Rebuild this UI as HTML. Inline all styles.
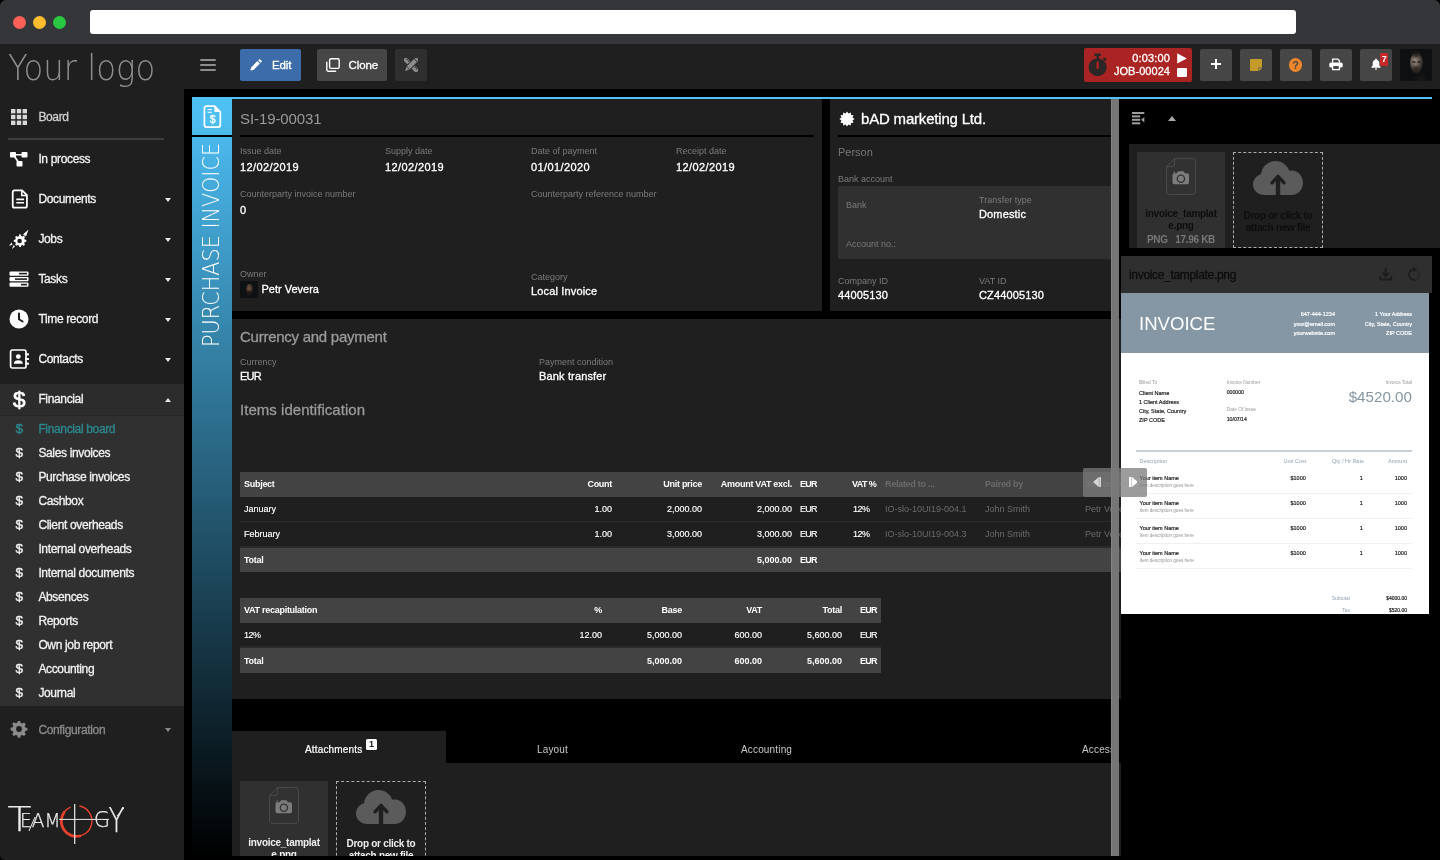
<!DOCTYPE html>
<html lang="en">
<head>
<meta charset="utf-8">
<title>Purchase invoice SI-19-00031</title>
<style>
*{box-sizing:border-box;margin:0;padding:0}
html,body{width:1440px;height:860px;overflow:hidden;background:#000}
body{position:relative;font-family:"Liberation Sans",sans-serif;color:#fff;font-size:11px;line-height:1}
.abs{position:absolute}
.med{font-weight:normal!important;-webkit-text-stroke:0.300px currentColor}
#win{will-change:transform;-webkit-font-smoothing:antialiased;position:absolute;left:0;top:0;width:1440px;height:860px;border-radius:6px 6px 0 5px;overflow:hidden;background:#000}
/* browser chrome */
#chrome{position:absolute;left:0;top:0;width:1440px;height:44px;background:#35363a}
.tl{position:absolute;top:15.500px;width:13px;height:13px;border-radius:50%}
#url{position:absolute;left:90px;top:10px;width:1206px;height:24px;background:#fff;border-radius:3px}
/* sidebar */
#side{position:absolute;left:0;top:44px;width:184px;height:816px;background:#1f1f1f}
#logo{letter-spacing:0;position:absolute;left:8px;top:1.500px;font-size:36px;line-height:44px;transform:scaleX(.898);color:#8e8e8e;font-family:"DejaVu Sans","Liberation Sans",sans-serif;font-weight:200;white-space:nowrap;transform-origin:0 0}
.mi{position:absolute;left:0;width:184px;height:40px}
.mi .t{letter-spacing:-0.350px;position:absolute;left:38.400px;top:13.100px;font-size:12px;line-height:14px;font-weight:bold;color:#f2f2f2;white-space:nowrap}
.mi svg.ic{position:absolute;left:9px;top:10px;width:20px;height:20px}
.caret{position:absolute;left:165px;top:19px;width:0;height:0;border-left:3.700px solid transparent;border-right:3.700px solid transparent;border-top:4px solid #e6e6e6}
.caret.up{border-top:none;border-bottom:4px solid #e6e6e6;top:18.500px}
.si{position:absolute;left:0;width:184px;height:24px}
.si .t{letter-spacing:-0.350px;position:absolute;left:38.400px;top:5.300px;font-size:12px;line-height:14px;font-weight:bold;color:#f2f2f2;white-space:nowrap}
.si .d{position:absolute;left:13.200px;top:4.300px;width:12px;font-size:13.500px;line-height:15px;color:#f2f2f2;text-align:center;-webkit-text-stroke:0.400px currentColor;letter-spacing:0}
/* toolbar */
#tb{position:absolute;left:184px;top:44px;width:1256px;height:45px;background:#1f1f1f}
.btn{position:absolute;top:5px;height:32px;border-radius:2px;background:#464646}
.btn .t{letter-spacing:-0.100px;position:absolute;top:8.500px;font-size:11.500px;line-height:14px;font-weight:bold;color:#fff;white-space:nowrap}
/* content */
#main{position:absolute;left:184px;top:89px;width:1256px;height:771px;background:#000}
.lbl{position:absolute;font-size:9px;line-height:11px;color:#7b7b7b;white-space:nowrap}
.val{letter-spacing:0.150px;position:absolute;font-size:11px;line-height:13px;color:#fff;font-weight:bold;white-space:nowrap}
.h2{position:absolute;font-size:15px;line-height:18px;color:#9a9a9a;white-space:nowrap}
.panel{position:absolute;background:#1f1f1f}

.th{letter-spacing:-0.280px;position:absolute;font-size:9px;line-height:11px;font-weight:bold;color:#fff;white-space:nowrap}
.td{position:absolute;font-size:9px;line-height:11px;color:#fff;white-space:nowrap;-webkit-text-stroke:0.150px currentColor}
.tab{letter-spacing:0.160px;position:absolute;font-size:10px;line-height:12px;color:#c8c8c8;white-space:nowrap}
.vtxt span{letter-spacing:0;position:absolute;left:6px;top:210px;transform-origin:0 0;transform:rotate(-90deg) scaleX(.892);font-family:"DejaVu Sans","Liberation Sans",sans-serif;font-weight:200;font-size:23.300px;line-height:26px;color:#fff;white-space:nowrap;display:block}
.fname{position:absolute;left:0;width:100%;text-align:center;font-size:10px;line-height:12px;color:#f0f0f0;font-weight:bold;letter-spacing:-0.280px}
.drop{border:1px dashed #ababab}

</style>
</head>
<body>
<div id="win">

<!-- ===== browser chrome ===== -->
<div id="chrome">
  <div class="tl" style="left:13px;background:#fe5f57"></div>
  <div class="tl" style="left:33px;background:#febc2e"></div>
  <div class="tl" style="left:53px;background:#28c840"></div>
  <div id="url"></div>
</div>

<!-- ===== sidebar ===== -->
<div id="side">
  <div id="logo">Your logo</div>
  <!-- Board -->
  <div class="mi" style="top:53px">
    <svg class="ic" viewBox="0 0 20 20" style="left:9px;top:10px"><g fill="#d8d8d8"><rect x="2" y="2" width="4.4" height="4.4"/><rect x="7.8" y="2" width="4.4" height="4.4"/><rect x="13.6" y="2" width="4.4" height="4.4"/><rect x="2" y="7.8" width="4.4" height="4.4"/><rect x="7.8" y="7.8" width="4.4" height="4.4"/><rect x="13.6" y="7.8" width="4.4" height="4.4"/><rect x="2" y="13.6" width="4.4" height="4.4"/><rect x="7.8" y="13.6" width="4.4" height="4.4"/><rect x="13.6" y="13.6" width="4.4" height="4.4"/></g></svg>
    <div class="t med" style="color:#d0d0d0">Board</div>
  </div>
  <div class="abs" style="left:8px;top:94px;width:156px;height:2px;background:#3e3e3e"></div>
  <!-- In process -->
  <div class="mi" style="top:95px">
    <svg class="ic" viewBox="0 0 20 20"><g fill="#fff"><rect x="1" y="3" width="6" height="5.5" rx="1"/><rect x="12.5" y="3" width="6" height="5.5" rx="1"/><rect x="7.5" y="12" width="6" height="5.5" rx="1"/></g><path d="M7 5.7h6M4.5 6l5.5 8" stroke="#fff" stroke-width="1.6" fill="none"/></svg>
    <div class="t med">In process</div>
  </div>
  <!-- Documents -->
  <div class="mi" style="top:135px">
    <svg class="ic" viewBox="0 0 20 20" style="left:9.500px;top:9px;width:21px;height:22px"><path d="M4.2 1.8h7.3l4.6 4.6v10.2a1.6 1.6 0 0 1-1.6 1.6H4.2a1.6 1.6 0 0 1-1.6-1.6V3.4a1.6 1.6 0 0 1 1.6-1.6z" fill="none" stroke="#fff" stroke-width="1.7"/><path d="M11.2 2v4.6h4.6" fill="none" stroke="#fff" stroke-width="1.5"/><path d="M6 10.4h7.4M6 13.6h7.4" stroke="#fff" stroke-width="1.6"/></svg>
    <div class="t med">Documents</div><div class="caret"></div>
  </div>
  <!-- Jobs -->
  <div class="mi" style="top:175px">
    <svg class="ic" viewBox="0 0 20 20"><g fill="#fff"><path d="M10.2 5.2l1.7.3.3 1.5 1.2.6 1.4-.8 1.2 1.2-.8 1.4.6 1.2 1.5.3v1.8l-1.5.3-.6 1.2.8 1.4-1.2 1.2-1.4-.8-1.2.6-.3 1.5h-1.7l-.3-1.5-1.2-.6-1.4.8-1.2-1.2.8-1.4-.6-1.2-1.5-.3v-1.8l1.5-.3.6-1.2-.8-1.4L7.300 7l1.400.800 1.200-.6z"/><path d="M14 5.500L19.500.5 17 7.500z"/><path d="M2.500 13.500L0 17l3.500-1.500zM4.500 16L3 20l3-2.500z"/></g><circle cx="10.600" cy="12" r="2.300" fill="#1f1f1f"/></svg>
    <div class="t med">Jobs</div><div class="caret"></div>
  </div>
  <!-- Tasks -->
  <div class="mi" style="top:215px">
    <svg class="ic" viewBox="0 0 20 20"><g fill="#fff"><rect x="0.500" y="2.500" width="19" height="4.200" rx="1"/><rect x="0.500" y="8" width="19" height="4.200" rx="1"/><rect x="0.500" y="13.500" width="19" height="4.200" rx="1"/></g><g fill="#1f1f1f"><rect x="10" y="3.800" width="8" height="1.600"/><rect x="6" y="9.300" width="12" height="1.600"/><rect x="12" y="14.800" width="6" height="1.600"/></g></svg>
    <div class="t med">Tasks</div><div class="caret"></div>
  </div>
  <!-- Time record -->
  <div class="mi" style="top:255px">
    <svg class="ic" viewBox="0 0 20 20"><circle cx="10" cy="10" r="9.500" fill="#fff"/><path d="M10 4.500v5.800l3.600 2.200" stroke="#1f1f1f" stroke-width="2" fill="none" stroke-linecap="round"/></svg>
    <div class="t med">Time record</div><div class="caret"></div>
  </div>
  <!-- Contacts -->
  <div class="mi" style="top:295px">
    <svg class="ic" viewBox="0 0 20 20"><rect x="1.600" y="1" width="15.400" height="18" rx="1.800" fill="none" stroke="#fff" stroke-width="1.700"/><path d="M17.500 5.300h1.600M17.500 10h1.600M17.500 14.700h1.600" stroke="#fff" stroke-width="2.200" stroke-linecap="round"/><circle cx="9.300" cy="7.600" r="2.400" fill="#fff"/><path d="M4.800 14.800c0-2.500 2-3.600 4.500-3.600s4.500 1.100 4.500 3.600z" fill="#fff"/></svg>
    <div class="t med">Contacts</div><div class="caret"></div>
  </div>
  <!-- Financial (open) -->
  <div class="abs" style="left:0;top:340px;width:184px;height:322px;background:#303030"></div>
  <div class="abs" style="left:0;top:340px;width:184px;height:32px;background:#2c2c2c"></div>
  <div class="abs" style="left:0;top:371px;width:184px;height:1px;background:#262626"></div>
  <div class="mi" style="top:335px">
    <div class="abs" style="left:11.300px;top:6.500px;width:16px;font-size:22.500px;line-height:28px;color:#fff;text-align:center;-webkit-text-stroke:0.700px #fff">$</div>
    <div class="t med">Financial</div><div class="caret up"></div>
  </div>
  <div class="si" style="top:373px"><div class="d" style="color:#2b8a90">$</div><div class="t med" style="color:#2b8a90">Financial board</div></div>
  <div class="si" style="top:397px"><div class="d">$</div><div class="t med">Sales invoices</div></div>
  <div class="si" style="top:421px"><div class="d">$</div><div class="t med">Purchase invoices</div></div>
  <div class="si" style="top:445px"><div class="d">$</div><div class="t med">Cashbox</div></div>
  <div class="si" style="top:469px"><div class="d">$</div><div class="t med">Client overheads</div></div>
  <div class="si" style="top:493px"><div class="d">$</div><div class="t med">Internal overheads</div></div>
  <div class="si" style="top:517px"><div class="d">$</div><div class="t med">Internal documents</div></div>
  <div class="si" style="top:541px"><div class="d">$</div><div class="t med">Absences</div></div>
  <div class="si" style="top:565px"><div class="d">$</div><div class="t med">Reports</div></div>
  <div class="si" style="top:589px"><div class="d">$</div><div class="t med">Own job report</div></div>
  <div class="si" style="top:613px"><div class="d">$</div><div class="t med">Accounting</div></div>
  <div class="si" style="top:637px"><div class="d">$</div><div class="t med">Journal</div></div>
  <!-- Configuration -->
  <div class="mi" style="top:665px">
    <svg class="ic" viewBox="0 0 20 20" style="left:10px;top:11px;width:18px;height:18px"><path d="M8.600 1h2.800l.5 2.300 1.700.7 2-1.300 2 2-1.300 2 .7 1.700 2.300.500v2.800l-2.300.500-.7 1.700 1.300 2-2 2-2-1.300-1.700.700-.5 2.300H8.600l-.5-2.300-1.700-.7-2 1.300-2-2 1.300-2-.7-1.700L.7 11.400V8.600L3 8.100l.7-1.700-1.300-2 2-2 2 1.300 1.700-.7z" fill="#8a8a8a"/><circle cx="10" cy="10" r="3.200" fill="#1f1f1f"/></svg>
    <div class="t med" style="color:#8a8a8a;top:13.800px">Configuration</div><div class="caret" style="border-top-color:#8a8a8a"></div>
  </div>
  <!-- Teamogy logo -->
  <svg class="abs" style="left:0;top:746px" width="160" height="70" viewBox="0 0 160 70">
    <g font-family="'DejaVu Sans','Liberation Sans',sans-serif" font-weight="200" fill="#ececec" stroke="#ececec" stroke-width="0.250">
      <text x="7.500" y="40.600" font-size="33" textLength="24" lengthAdjust="spacingAndGlyphs">T</text>
      <text x="20" y="36.700" font-size="19.500" textLength="40.500" lengthAdjust="spacingAndGlyphs">EAM</text>
      <text x="94" y="37.200" font-size="21.500" textLength="16" lengthAdjust="spacingAndGlyphs">G</text>
      <text x="108.500" y="41.700" font-size="34" textLength="16" lengthAdjust="spacingAndGlyphs">Y</text>
    </g>
    <path d="M29 41L35 27M117 26L124 18" stroke="#ececec" stroke-width="1" fill="none"/>
    <circle cx="76.700" cy="31" r="15.200" fill="none" stroke="#e8412c" stroke-width="1.400" stroke-dasharray="86 9.500" transform="rotate(-80 76.700 31)"/>
    <path d="M64 22.500A15.200 15.200 0 0 0 80 46" fill="none" stroke="#e8412c" stroke-width="2.800" stroke-linecap="round"/>
    <path d="M74.700 14v40" stroke="#ececec" stroke-width="1.200"/>
    <path d="M59 29.400h50" stroke="#ececec" stroke-width="1"/>
  </svg>
<!--SIDEBAR_END-->
</div>

<!-- ===== toolbar ===== -->
<div id="tb">
  <!-- hamburger -->
  <div class="abs" style="left:16px;top:14.600px;width:16px;height:2.400px;background:#8d8d8d;border-radius:1px"></div>
  <div class="abs" style="left:16px;top:19.800px;width:16px;height:2.400px;background:#8d8d8d;border-radius:1px"></div>
  <div class="abs" style="left:16px;top:25px;width:16px;height:2.400px;background:#8d8d8d;border-radius:1px"></div>
  <!-- Edit -->
  <div class="btn" style="left:56px;width:61px;background:#3c6ca9">
    <svg class="abs" style="left:10px;top:9.500px" width="12" height="12" viewBox="0 0 12 12"><path d="M.4 11.600l.700-3.200 6.300-6.300 2.500 2.500-6.300 6.300z" fill="#fff"/><path d="M8.200 1.300l.9-.9a.9.9 0 0 1 1.200 0l1.300 1.300a.9.9 0 0 1 0 1.200l-.9.900z" fill="#fff"/></svg>
    <div class="t med" style="left:32px">Edit</div>
  </div>
  <!-- Clone -->
  <div class="btn" style="left:133px;width:70px">
    <svg class="abs" style="left:8.500px;top:9px" width="14" height="14" viewBox="0 0 14 14"><rect x="3.600" y="0.800" width="9.600" height="9.600" rx="1.400" fill="none" stroke="#fff" stroke-width="1.400"/><path d="M.8 3.800v8a1.400 1.400 0 0 0 1.400 1.400h8" fill="none" stroke="#fff" stroke-width="1.400"/></svg>
    <div class="t med" style="left:31.500px">Clone</div>
  </div>
  <!-- tools -->
  <div class="btn" style="left:211px;width:32px;background:#2f2f2f">
    <svg class="abs" style="left:9px;top:8.800px" width="14" height="14" viewBox="0 0 14 14"><g fill="#8c8c8c"><g transform="rotate(-45 7 7)"><rect x="4.900" y="-2.200" width="4.200" height="18.400"/></g><g transform="rotate(-45 7 7)" fill="#2f2f2f"><rect x="7.400" y="0" width="1.700" height="1"/><rect x="7.400" y="2.200" width="1.700" height="1"/><rect x="7.400" y="11" width="1.700" height="1"/><rect x="7.400" y="13.200" width="1.700" height="1"/></g><g transform="rotate(45 7 7)"><rect x="3.900" y="-3" width="6.200" height="16.500" fill="#2f2f2f"/><rect x="4.900" y="-2.400" width="4.200" height="2.200"/><rect x="4.900" y="0.600" width="4.200" height="10.200"/><path d="M4.900 11.400h4.200L7 15.400z"/></g></g></svg>
  </div>
  <!-- timer -->
  <div class="abs" style="left:900px;top:4px;width:108px;height:34px;background:#a92422;border-radius:2px">
    <svg class="abs" style="left:4px;top:5px" width="20" height="24" viewBox="0 0 20 24"><g fill="#2c2626"><circle cx="9.600" cy="14.200" r="9"/><rect x="6.400" y="0.400" width="6.500" height="2.600" rx="0.600"/><rect x="8.500" y="2.500" width="2.300" height="3.500"/><rect x="15" y="5" width="3.400" height="2.200" rx=".5" transform="rotate(42 16.700 6.100)"/></g><rect x="8.400" y="8.600" width="2.500" height="7.400" rx="1" fill="#a92422"/></svg>
    <div class="abs med" style="right:22px;top:3.600px;font-size:11px;line-height:13px;white-space:nowrap;letter-spacing:0.150px">0:03:00</div>
    <div class="abs med" style="right:22px;top:16.600px;font-size:11px;line-height:13px;white-space:nowrap;letter-spacing:0.050px">JOB-00024</div>
    <svg class="abs" style="left:93px;top:4.500px" width="10" height="11" viewBox="0 0 10 11"><path d="M.2 .2v10.400l9.600-5.200z" fill="#fff"/></svg>
    <div class="abs" style="left:93.200px;top:20.300px;width:9.800px;height:9px;background:#fff;border-radius:1px"></div>
  </div>
  <!-- plus -->
  <div class="btn" style="left:1016px;width:32px">
    <div class="abs" style="left:10.600px;top:13.600px;width:10.600px;height:2.800px;background:#fff"></div>
    <div class="abs" style="left:14.500px;top:9.700px;width:2.800px;height:10.600px;background:#fff"></div>
  </div>
  <!-- note -->
  <div class="btn" style="left:1056px;width:32px">
    <svg class="abs" style="left:10.300px;top:10px" width="12" height="12" viewBox="0 0 12 12"><path d="M.8 0h10.400a.8.800 0 0 1 .8.800V8l-4 4H.8a.8.800 0 0 1-.800-.800V.8A.8.800 0 0 1 .8 0z" fill="#c49b2b"/><path d="M8 12V9a1 1 0 0 1 1-1h3z" fill="#8a7a4a"/><path d="M9.300 12V10a.7.700 0 0 1 .7-.700h2z" fill="#b8922e"/></svg>
  </div>
  <!-- help -->
  <div class="btn" style="left:1096px;width:32px">
    <div class="abs" style="left:8.800px;top:9px;width:13.500px;height:13.500px;border-radius:50%;background:#f0862a"></div>
    <div class="abs" style="left:8.800px;top:9.500px;width:13.500px;font-size:11px;line-height:13px;font-weight:bold;color:#454545;text-align:center">?</div>
  </div>
  <!-- print -->
  <div class="btn" style="left:1136px;width:32px">
    <svg class="abs" style="left:9px;top:8.500px" width="14" height="13" viewBox="0 0 14 13"><path d="M3.600 4.500V1.100h5.200l1.600 1.600v1.800" fill="none" stroke="#fff" stroke-width="1.300"/><rect x="0.300" y="4.600" width="13.400" height="5" rx="1.600" fill="#fff"/><rect x="3.600" y="7.400" width="6.800" height="4.200" fill="#464646" stroke="#fff" stroke-width="1.300"/></svg>
  </div>
  <!-- bell -->
  <div class="btn" style="left:1176px;width:32px">
    <svg class="abs" style="left:11px;top:8.700px" width="10" height="12" viewBox="0 0 12 14"><path d="M6 .500c.6 0 1 .4 1 1v.400c1.800.5 3 2 3 4v3l1.500 1.700v.9H.5v-.9L2 8.900v-3c0-2 1.200-3.500 3-4v-.400c0-.6.400-1 1-1z" fill="#fff"/><path d="M4.500 12.300h3a1.500 1.500 0 0 1-3 0z" fill="#fff"/></svg>
    <div class="abs" style="left:20.300px;top:4px;width:7.700px;height:12.500px;background:#c62828;border-radius:1.500px"></div>
    <div class="abs" style="left:20.300px;top:5px;width:7.700px;font-size:9px;line-height:10px;font-weight:bold;text-align:center;color:#fff;letter-spacing:0">7</div>
  </div>
  <!-- avatar -->
  <div class="abs" style="left:1216px;top:5px;width:32px;height:32px;background:#0d0f11;border-radius:2px;overflow:hidden">
    <div class="abs" style="left:0;top:0;width:32px;height:32px;filter:blur(.700px)">
      <div class="abs" style="left:9.500px;top:4px;width:13px;height:20px;border-radius:48% 48% 50% 50%;background:radial-gradient(ellipse at 40% 40%,#94877b 0%,#6a5e54 32%,#352e2a 62%,rgba(13,15,17,0) 92%)"></div>
      <div class="abs" style="left:10px;top:2px;width:12px;height:7px;border-radius:50%;background:radial-gradient(ellipse at 50% 40%,#1d1a18 0%,rgba(13,15,17,0) 90%)"></div>
      <div class="abs" style="left:11.500px;top:12px;width:4px;height:2px;border-radius:50%;background:#2a2421;opacity:.800"></div>
      <div class="abs" style="left:17px;top:12px;width:4px;height:2px;border-radius:50%;background:#2a2421;opacity:.800"></div>
      <div class="abs" style="left:11px;top:17px;width:10px;height:8px;border-radius:30% 30% 50% 50%;background:radial-gradient(ellipse at 50% 45%,rgba(38,32,29,.850) 0%,rgba(13,15,17,0) 100%)"></div>
      <div class="abs" style="left:14px;top:23px;width:14px;height:10px;border-radius:50% 50% 0 0;background:radial-gradient(ellipse at 50% 100%,#1c1a19 0%,rgba(13,15,17,0) 90%)"></div>
    </div>
  </div>
<!--TOOLBAR_END-->
</div>

<!-- ===== main ===== -->
<div id="main">
<!--MAIN_START-->
<div class="abs" style="left:48px;top:10px;width:590px;height:212px;background:#1f1f1f;"></div>
<div class="abs" style="left:646px;top:10px;width:289px;height:212px;background:#1f1f1f;"></div>
<div class="abs" style="left:48px;top:230px;width:889px;height:380px;background:#1f1f1f;"></div>
<div class="abs" style="left:48px;top:642px;width:214px;height:32px;background:#1f1f1f;"></div>
<div class="abs" style="left:48px;top:674px;width:889px;height:93px;background:#1f1f1f;"></div>
<div class="abs" style="left:8px;top:8px;width:1240px;height:2px;background:#4fc3f7;"></div>
<div class="abs" style="left:8px;top:8px;width:40px;height:38px;background:linear-gradient(180deg,#4fc2f5,#4bbbec)">
<svg class="abs" style="left:10.500px;top:8px" width="20" height="24" viewBox="0 0 20 24"><path d="M3.400 1.200h8.200l5.700 5.700v13.200a2 2 0 0 1-2 2H3.400a2 2 0 0 1-2-2V3.200a2 2 0 0 1 2-2z" fill="none" stroke="#fff" stroke-width="1.700"/><path d="M11.400 1.600v5.500h5.500z" fill="#fff"/><path d="M4.600 4.500h4.300M4.600 7.200h4.300" stroke="#fff" stroke-width="1.100"/><text x="9.700" y="18.300" font-size="10.500" fill="#fff" stroke="#fff" stroke-width=".3" text-anchor="middle" font-family="'Liberation Sans',sans-serif">$</text></svg>
</div>
<div class="abs" style="left:8px;top:48px;width:40px;height:719px;background:linear-gradient(180deg,#4ab7eb 0%,#000 100%);"></div>
<div class="abs vtxt" style="left:8px;top:48px;width:40px;height:212px"><span>PURCHASE INVOICE</span></div>
<div class="h2" style="left:56px;top:21px;color:#9a9a9a;letter-spacing:-0.090px">SI-19-00031</div>
<div class="abs" style="left:56px;top:46px;width:574px;height:2px;background:#000;"></div>
<div class="lbl" style="left:56px;top:57px;">Issue date</div>
<div class="val med" style="left:56px;top:72px;letter-spacing:0.400px">12/02/2019</div>
<div class="lbl" style="left:201px;top:57px;">Supply date</div>
<div class="val med" style="left:201px;top:72px;letter-spacing:0.400px">12/02/2019</div>
<div class="lbl" style="left:347px;top:57px;">Date of payment</div>
<div class="val med" style="left:347px;top:72px;letter-spacing:0.400px">01/01/2020</div>
<div class="lbl" style="left:492px;top:57px;">Receipt date</div>
<div class="val med" style="left:492px;top:72px;letter-spacing:0.400px">12/02/2019</div>
<div class="lbl" style="left:56px;top:100px;">Counterparty invoice number</div>
<div class="val med" style="left:56px;top:115px;">0</div>
<div class="lbl" style="left:347px;top:100px;">Counterparty reference number</div>
<div class="lbl" style="left:56px;top:180px;">Owner</div>
<div class="abs" style="left:56px;top:192px;width:18px;height:17px;background:#0e1114;border-radius:2px;overflow:hidden"><div class="abs" style="left:5.500px;top:3px;width:7px;height:11px;border-radius:45% 45% 50% 50%;filter:blur(.600px);background:radial-gradient(ellipse at 45% 38%,#6f5646 0%,#4a382c 38%,#221c19 72%,rgba(14,17,20,0) 100%)"></div><div class="abs" style="left:6px;top:9.500px;width:6px;height:5px;border-radius:30% 30% 50% 50%;filter:blur(.500px);background:rgba(24,20,18,.700)"></div></div>
<div class="val med" style="left:77.5px;top:194px;letter-spacing:0">Petr Vevera</div>
<div class="lbl" style="left:347px;top:182.5px;">Category</div>
<div class="val med" style="left:347px;top:196px;">Local Invoice</div>
<svg class="abs" style="left:655px;top:22px" width="16" height="16" viewBox="0 0 16 16"><polygon fill="#fff" points="8.00,0.40 9.48,2.49 11.80,1.42 12.03,3.97 14.58,4.20 13.51,6.52 15.60,8.00 13.51,9.48 14.58,11.80 12.03,12.03 11.80,14.58 9.48,13.51 8.00,15.60 6.52,13.51 4.20,14.58 3.97,12.03 1.42,11.80 2.49,9.48 0.40,8.00 2.49,6.52 1.42,4.20 3.97,3.97 4.20,1.42 6.52,2.49"/></svg>
<div class="h2 med" style="left:677px;top:21px;color:#fff;letter-spacing:-0.190px">bAD marketing Ltd.</div>
<div class="abs" style="left:654px;top:46px;width:281px;height:2px;background:#000;"></div>
<div class="lbl" style="left:654px;top:57px;font-size:11px;line-height:13px;color:#777">Person</div>
<div class="lbl" style="left:654px;top:85px;">Bank account</div>
<div class="abs" style="left:654px;top:97px;width:281px;height:73px;background:#303030;"></div>
<div class="lbl" style="left:662px;top:111px;">Bank</div>
<div class="lbl" style="left:795px;top:106px;">Transfer type</div>
<div class="val med" style="left:795px;top:119px;">Domestic</div>
<div class="lbl" style="left:662px;top:150px;">Account no.:</div>
<div class="lbl" style="left:654px;top:187px;">Company ID</div>
<div class="val med" style="left:654px;top:200px;">44005130</div>
<div class="lbl" style="left:795px;top:187px;">VAT ID</div>
<div class="val med" style="left:795px;top:200px;">CZ44005130</div>
<div class="h2 med" style="left:56px;top:239px;letter-spacing:-0.260px;-webkit-text-stroke-width:0.300px">Currency and payment</div>
<div class="lbl" style="left:56px;top:268px;">Currency</div>
<div class="val med" style="left:56px;top:281px;letter-spacing:-0.800px">EUR</div>
<div class="lbl" style="left:355px;top:268px;">Payment condition</div>
<div class="val med" style="left:355px;top:281px;">Bank transfer</div>
<div class="h2 med" style="left:56px;top:312px;letter-spacing:0.040px;-webkit-text-stroke-width:0.300px">Items identification</div>
<div class="abs" style="left:56px;top:383px;width:881px;height:25px;background:#434343;"></div>
<div class="abs" style="left:56px;top:432px;width:881px;height:1px;background:#2e2e2e;"></div>
<div class="abs" style="left:56px;top:457px;width:881px;height:2px;background:#2a2a2a;"></div>
<div class="abs" style="left:56px;top:459px;width:881px;height:24px;background:#434343;"></div>
<div class="th" style="left:60px;top:390px;">Subject</div>
<div class="th" style="right:828px;top:390px;">Count</div>
<div class="th" style="right:738px;top:390px;">Unit price</div>
<div class="th" style="right:648px;top:390px;">Amount VAT excl.</div>
<div class="th" style="left:616px;top:390px;letter-spacing:-0.700px">EUR</div>
<div class="th" style="left:668px;top:390px;letter-spacing:-0.600px">VAT %</div>
<div class="th" style="left:701px;top:390px;color:#6b6b6b">Related to ...</div>
<div class="th" style="left:801px;top:390px;color:#6b6b6b">Paired by</div>
<div class="th" style="left:901px;top:390px;color:#6b6b6b">Job owner</div>
<div class="td" style="left:60px;top:415px;">January</div>
<div class="td" style="right:828px;top:415px;">1.00</div>
<div class="td" style="right:738px;top:415px;">2,000.00</div>
<div class="td" style="right:648px;top:415px;">2,000.00</div>
<div class="td" style="left:616px;top:415px;letter-spacing:-0.700px">EUR</div>
<div class="td" style="left:669px;top:415px;letter-spacing:-0.500px">12%</div>
<div class="td" style="left:701px;top:415px;color:#6b6b6b;font-weight:normal;-webkit-text-stroke:0">IO-slo-10UI19-004.1</div>
<div class="td" style="left:801px;top:415px;color:#6b6b6b;font-weight:normal;-webkit-text-stroke:0">John Smith</div>
<div class="td" style="left:901px;top:415px;color:#6b6b6b;font-weight:normal;-webkit-text-stroke:0">Petr Vevera</div>
<div class="td" style="left:60px;top:440px;">February</div>
<div class="td" style="right:828px;top:440px;">1.00</div>
<div class="td" style="right:738px;top:440px;">3,000.00</div>
<div class="td" style="right:648px;top:440px;">3,000.00</div>
<div class="td" style="left:616px;top:440px;letter-spacing:-0.700px">EUR</div>
<div class="td" style="left:669px;top:440px;letter-spacing:-0.500px">12%</div>
<div class="td" style="left:701px;top:440px;color:#6b6b6b;font-weight:normal;-webkit-text-stroke:0">IO-slo-10UI19-004.3</div>
<div class="td" style="left:801px;top:440px;color:#6b6b6b;font-weight:normal;-webkit-text-stroke:0">John Smith</div>
<div class="td" style="left:901px;top:440px;color:#6b6b6b;font-weight:normal;-webkit-text-stroke:0">Petr Vevera</div>
<div class="th" style="left:60px;top:466px;">Total</div>
<div class="th" style="right:648px;top:466px;letter-spacing:0">5,000.00</div>
<div class="th" style="left:616px;top:466px;letter-spacing:-0.700px">EUR</div>
<div class="abs" style="left:56px;top:509px;width:641px;height:25px;background:#434343;"></div>
<div class="abs" style="left:56px;top:557px;width:641px;height:2px;background:#2a2a2a;"></div>
<div class="abs" style="left:56px;top:559px;width:641px;height:25px;background:#434343;"></div>
<div class="th" style="left:60px;top:516px;">VAT recapitulation</div>
<div class="th" style="right:838px;top:516px;">%</div>
<div class="th" style="right:758px;top:516px;">Base</div>
<div class="th" style="right:678px;top:516px;">VAT</div>
<div class="th" style="right:598px;top:516px;">Total</div>
<div class="th" style="left:676px;top:516px;letter-spacing:-0.700px">EUR</div>
<div class="td" style="left:60px;top:541px;letter-spacing:-0.500px">12%</div>
<div class="td" style="right:838px;top:541px;">12.00</div>
<div class="td" style="right:758px;top:541px;">5,000.00</div>
<div class="td" style="right:678px;top:541px;">600.00</div>
<div class="td" style="right:598px;top:541px;">5,600.00</div>
<div class="td" style="left:676px;top:541px;letter-spacing:-0.700px">EUR</div>
<div class="th" style="left:60px;top:567px;">Total</div>
<div class="th" style="right:758px;top:567px;letter-spacing:0">5,000.00</div>
<div class="th" style="right:678px;top:567px;letter-spacing:0">600.00</div>
<div class="th" style="right:598px;top:567px;letter-spacing:0">5,600.00</div>
<div class="th" style="left:676px;top:567px;letter-spacing:-0.700px">EUR</div>
<div class="tab med" style="left:121px;top:655px;color:#fff;-webkit-text-stroke-width:0.200px">Attachments</div>
<div class="abs" style="left:182px;top:650px;width:11px;height:11px;background:#fff;border-radius:1.500px;color:#222;font-size:9px;line-height:11px;font-weight:bold;text-align:center">1</div>
<div class="tab" style="left:353px;top:655px;">Layout</div>
<div class="tab" style="left:557px;top:655px;">Accounting</div>
<div class="tab" style="left:898px;top:655px;">Access rights</div>
<div class="abs" style="left:935px;top:642px;width:321px;height:32px;background:#000;"></div>
<div class="abs" style="left:56px;top:692px;width:88px;height:80px;background:#303030;"><svg class="abs" style="left:29px;top:6px" width="30" height="37" viewBox="0 0 30 37"><path d="M8.500 .5h18a3 3 0 0 1 3 3v30a3 3 0 0 1-3 3h-23a3 3 0 0 1-3-3V8.500z" fill="#323232" stroke="#494949" stroke-width="1"/><path d="M.5 8.500h5.500a2.500 2.500 0 0 0 2.500-2.500V.5" fill="none" stroke="#494949" stroke-width="1"/><path d="M8.300 15.200h2.500l1.300-2h5.400l1.300 2h2.400a1.800 1.800 0 0 1 1.800 1.800v7.400a1.800 1.800 0 0 1-1.800 1.800H8.300a1.800 1.800 0 0 1-1.800-1.800V17a1.800 1.800 0 0 1 1.800-1.800z" fill="#7c7c7c"/><circle cx="8.200" cy="14.300" r=".8" fill="#7c7c7c"/><circle cx="14.900" cy="20.700" r="4.300" fill="#323232"/><circle cx="14.900" cy="20.700" r="3" fill="#7c7c7c"/></svg><div class="fname" style="top:55.500px">invoice_tamplat<br>e.png</div></div>
<div class="abs drop" style="left:152px;top:692px;width:90px;height:90px"><svg class="abs" style="left:18px;top:7px" width="52" height="36" viewBox="0 0 52 36"><path d="M12.500 35C6 35 1 30.500 1 24.500c0-5 3.300-9 8-10.300C10 6.500 16 1 23.500 1c6.300 0 11.800 4 13.800 9.800.8-.200 1.600-.300 2.400-.300C46 10.500 51 16 51 22.700S46 35 39.700 35z" fill="#5b5b5b"/><path d="M26 35.500V19" fill="none" stroke="#1f1f1f" stroke-width="4.400"/><path d="M20 22.800L26 16.300l6 6.500" fill="none" stroke="#1f1f1f" stroke-width="3.400" stroke-linecap="round" stroke-linejoin="round"/></svg><div class="fname" style="top:56px;color:#ededed">Drop or click to<br>attach new file</div></div>
<div class="abs" style="left:0px;top:767px;width:1256px;height:4px;background:#000;"></div>
<div class="abs" style="left:927px;top:10px;width:8px;height:757px;background:#767676;border-left:1px solid #838383"></div>
<div class="abs" style="left:899px;top:379px;width:64px;height:28.700px;background:rgba(123,123,123,.750);border-radius:2px;z-index:5">
<svg class="abs" style="left:9.900px;top:8.800px" width="8.400" height="10" viewBox="0 0 8.400 10"><path d="M5.900 0v10L0 5z" fill="#d6d6d6"/><rect x="6.300" y="0" width="2.100" height="10" fill="#d6d6d6"/></svg>
<svg class="abs" style="left:45.700px;top:8.800px" width="8.800" height="10" viewBox="0 0 8.800 10"><path d="M3 0v10l5.800-5z" fill="#fff"/><rect x="0" y="0" width="2.500" height="10" fill="#fff"/></svg>
</div>
<svg class="abs" style="left:947.9px;top:22.6px" width="13" height="13" viewBox="0 0 13 13"><g fill="#9e9e9e"><rect x="0" y="0" width="12.300" height="2"/><rect x="0" y="3.400" width="8.200" height="2"/><rect x="0" y="6.800" width="8.200" height="2"/><rect x="0" y="10.300" width="8.200" height="2"/><path d="M12.300 5.100v5.400L9.100 7.800z"/></g></svg>
<div class="abs" style="left:984px;top:26.8px;width:0;height:0;border-left:4.500px solid transparent;border-right:4.500px solid transparent;border-bottom:5.200px solid #a9a9a9"></div>
<div class="abs" style="left:945px;top:55px;width:311px;height:104px;background:#1f1f1f;"></div>
<div class="abs" style="left:953px;top:63px;width:88px;height:96px;background:#303030;"><svg class="abs" style="left:29px;top:6px" width="30" height="37" viewBox="0 0 30 37"><path d="M8.500 .5h18a3 3 0 0 1 3 3v30a3 3 0 0 1-3 3h-23a3 3 0 0 1-3-3V8.500z" fill="#323232" stroke="#494949" stroke-width="1"/><path d="M.5 8.500h5.500a2.500 2.500 0 0 0 2.500-2.500V.5" fill="none" stroke="#494949" stroke-width="1"/><path d="M8.300 15.200h2.500l1.300-2h5.400l1.300 2h2.400a1.800 1.800 0 0 1 1.800 1.800v7.400a1.800 1.800 0 0 1-1.800 1.800H8.300a1.800 1.800 0 0 1-1.800-1.800V17a1.800 1.800 0 0 1 1.800-1.800z" fill="#7c7c7c"/><circle cx="8.200" cy="14.300" r=".8" fill="#7c7c7c"/><circle cx="14.900" cy="20.700" r="4.300" fill="#323232"/><circle cx="14.900" cy="20.700" r="3" fill="#7c7c7c"/></svg><div class="fname" style="top:56px;color:#0d0d0d">invoice_tamplat<br>e.png</div><div class="fname" style="top:81.500px;color:#777;letter-spacing:-0.300px">PNG &nbsp; 17.96 KB</div></div>
<div class="abs drop" style="left:1049px;top:63px;width:90px;height:96px"><svg class="abs" style="left:18px;top:6.6px" width="52" height="36" viewBox="0 0 52 36"><path d="M12.500 35C6 35 1 30.500 1 24.500c0-5 3.300-9 8-10.300C10 6.500 16 1 23.500 1c6.300 0 11.800 4 13.800 9.800.8-.200 1.600-.300 2.400-.300C46 10.500 51 16 51 22.700S46 35 39.700 35z" fill="#5b5b5b"/><path d="M26 35.500V19" fill="none" stroke="#1f1f1f" stroke-width="4.400"/><path d="M20 22.800L26 16.300l6 6.500" fill="none" stroke="#1f1f1f" stroke-width="3.400" stroke-linecap="round" stroke-linejoin="round"/></svg><div class="fname" style="top:56.500px;color:#0d0d0d">Drop or click to<br>attach new file</div></div>
<div class="abs" style="left:937px;top:167px;width:311px;height:37px;background:#2f2f2f;"></div>
<div class="abs med" style="left:945px;top:178.5px;font-size:12px;line-height:14px;color:#0c0c0c;white-space:nowrap;letter-spacing:-0.320px">invoice_tamplate.png</div>
<svg class="abs" style="left:1194px;top:177px" width="15" height="15" viewBox="0 0 15 15"><path d="M7.600 1.600v8M4.200 6.800l3.400 3.300L11 6.800" fill="none" stroke="#1d1d1d" stroke-width="2"/><path d="M1.900 10v2a1.600 1.600 0 0 0 1.600 1.600h8.200a1.600 1.600 0 0 0 1.600-1.600v-2" fill="none" stroke="#1d1d1d" stroke-width="2"/></svg>
<svg class="abs" style="left:1222px;top:177px" width="15" height="15" viewBox="0 0 15 15"><path d="M8 3.400A5.200 5.200 0 1 0 8 13.800" fill="none" stroke="#1d1d1d" stroke-width="1.900"/><path d="M8 13.800A5.200 5.200 0 0 0 11.700 4.900" fill="none" stroke="#1d1d1d" stroke-width="1.900" stroke-dasharray="1.300 1.500"/><path d="M7.600 .8l3.800 2.700-3.800 2.500z" fill="#1d1d1d"/></svg>
<svg class="abs" style="left:937px;top:204px" width="308" height="321" viewBox="1121 293 308 321" font-family="'Liberation Sans',sans-serif">
<rect x="1121" y="293" width="308" height="321" fill="#fff"/>
<rect x="1121" y="293" width="308" height="60" fill="#8597a4"/>
<text x="1139" y="330" font-size="18.6" fill="#fff" text-anchor="start">INVOICE</text>
<text x="1335" y="316.4" font-size="5.5" fill="#fff" text-anchor="end" stroke="#fff" stroke-width="0.18">647-444-1234</text>
<text x="1335" y="325.5" font-size="5.5" fill="#fff" text-anchor="end" stroke="#fff" stroke-width="0.18">your@email.com</text>
<text x="1335" y="334.59999999999997" font-size="5.5" fill="#fff" text-anchor="end" stroke="#fff" stroke-width="0.18">yourwebsite.com</text>
<text x="1412" y="316.4" font-size="5.5" fill="#fff" text-anchor="end" stroke="#fff" stroke-width="0.18">1 Your Address</text>
<text x="1412" y="325.5" font-size="5.5" fill="#fff" text-anchor="end" stroke="#fff" stroke-width="0.18">City, State, Country</text>
<text x="1412" y="334.59999999999997" font-size="5.5" fill="#fff" text-anchor="end" stroke="#fff" stroke-width="0.18">ZIP CODE</text>
<text x="1139" y="383.5" font-size="4.8" fill="#9a9a9a" text-anchor="start">Billed To</text>
<text x="1139" y="394.8" font-size="5.5" fill="#1a1a1a" text-anchor="start" stroke="#1a1a1a" stroke-width="0.18">Client Name</text>
<text x="1139" y="403.8" font-size="5.5" fill="#1a1a1a" text-anchor="start" stroke="#1a1a1a" stroke-width="0.18">1 Client Address</text>
<text x="1139" y="412.8" font-size="5.5" fill="#1a1a1a" text-anchor="start" stroke="#1a1a1a" stroke-width="0.18">City, State, Country</text>
<text x="1139" y="421.8" font-size="5.5" fill="#1a1a1a" text-anchor="start" stroke="#1a1a1a" stroke-width="0.18">ZIP CODE</text>
<text x="1226.7" y="383.5" font-size="4.8" fill="#9a9a9a" text-anchor="start">Invoice Number</text>
<text x="1226.7" y="393.6" font-size="5.2" fill="#1a1a1a" text-anchor="start" stroke="#1a1a1a" stroke-width="0.18">000000</text>
<text x="1226.7" y="411.3" font-size="4.8" fill="#9a9a9a" text-anchor="start">Date Of Issue</text>
<text x="1226.7" y="421" font-size="5.2" fill="#1a1a1a" text-anchor="start" stroke="#1a1a1a" stroke-width="0.18">10/07/14</text>
<text x="1412" y="383.5" font-size="4.8" fill="#9a9a9a" text-anchor="end">Invoice Total</text>
<text x="1412" y="402" font-size="15.2" fill="#8597a4" text-anchor="end">$4520.00</text>
<rect x="1136" y="450.500" width="276" height="1" fill="#91a4b3"/>
<text x="1139.6" y="463" font-size="5.5" fill="#8fa3b3" text-anchor="start">Description</text>
<text x="1306.2" y="463" font-size="5.5" fill="#8fa3b3" text-anchor="end">Unit Cost</text>
<text x="1364" y="463" font-size="5.5" fill="#8fa3b3" text-anchor="end">Qty / Hr Rate</text>
<text x="1407" y="463" font-size="5.5" fill="#8fa3b3" text-anchor="end">Amount</text>
<text x="1139.6" y="479.6" font-size="5.5" fill="#1a1a1a" text-anchor="start" stroke="#1a1a1a" stroke-width="0.18">Your item Name</text>
<text x="1139.6" y="486.70000000000005" font-size="4.6" fill="#949494" text-anchor="start">Item description goes here</text>
<text x="1305.8" y="479.6" font-size="5.5" fill="#1a1a1a" text-anchor="end" stroke="#1a1a1a" stroke-width="0.18">$1000</text>
<text x="1362.7" y="479.6" font-size="5.5" fill="#1a1a1a" text-anchor="end" stroke="#1a1a1a" stroke-width="0.18">1</text>
<text x="1407" y="479.6" font-size="5.5" fill="#1a1a1a" text-anchor="end" stroke="#1a1a1a" stroke-width="0.18">1000</text>
<rect x="1136" y="493.0" width="276" height="0.600" fill="#e6e6e6"/>
<text x="1139.6" y="504.70000000000005" font-size="5.5" fill="#1a1a1a" text-anchor="start" stroke="#1a1a1a" stroke-width="0.18">Your item Name</text>
<text x="1139.6" y="511.80000000000007" font-size="4.6" fill="#949494" text-anchor="start">Item description goes here</text>
<text x="1305.8" y="504.70000000000005" font-size="5.5" fill="#1a1a1a" text-anchor="end" stroke="#1a1a1a" stroke-width="0.18">$1000</text>
<text x="1362.7" y="504.70000000000005" font-size="5.5" fill="#1a1a1a" text-anchor="end" stroke="#1a1a1a" stroke-width="0.18">1</text>
<text x="1407" y="504.70000000000005" font-size="5.5" fill="#1a1a1a" text-anchor="end" stroke="#1a1a1a" stroke-width="0.18">1000</text>
<rect x="1136" y="518.1" width="276" height="0.600" fill="#e6e6e6"/>
<text x="1139.6" y="529.8000000000001" font-size="5.5" fill="#1a1a1a" text-anchor="start" stroke="#1a1a1a" stroke-width="0.18">Your item Name</text>
<text x="1139.6" y="536.9000000000001" font-size="4.6" fill="#949494" text-anchor="start">Item description goes here</text>
<text x="1305.8" y="529.8000000000001" font-size="5.5" fill="#1a1a1a" text-anchor="end" stroke="#1a1a1a" stroke-width="0.18">$1000</text>
<text x="1362.7" y="529.8000000000001" font-size="5.5" fill="#1a1a1a" text-anchor="end" stroke="#1a1a1a" stroke-width="0.18">1</text>
<text x="1407" y="529.8000000000001" font-size="5.5" fill="#1a1a1a" text-anchor="end" stroke="#1a1a1a" stroke-width="0.18">1000</text>
<rect x="1136" y="543.2" width="276" height="0.600" fill="#e6e6e6"/>
<text x="1139.6" y="554.9000000000001" font-size="5.5" fill="#1a1a1a" text-anchor="start" stroke="#1a1a1a" stroke-width="0.18">Your item Name</text>
<text x="1139.6" y="562.0000000000001" font-size="4.6" fill="#949494" text-anchor="start">Item description goes here</text>
<text x="1305.8" y="554.9000000000001" font-size="5.5" fill="#1a1a1a" text-anchor="end" stroke="#1a1a1a" stroke-width="0.18">$1000</text>
<text x="1362.7" y="554.9000000000001" font-size="5.5" fill="#1a1a1a" text-anchor="end" stroke="#1a1a1a" stroke-width="0.18">1</text>
<text x="1407" y="554.9000000000001" font-size="5.5" fill="#1a1a1a" text-anchor="end" stroke="#1a1a1a" stroke-width="0.18">1000</text>
<rect x="1136" y="568.3" width="276" height="0.600" fill="#e6e6e6"/>
<text x="1350" y="600.4" font-size="5" fill="#8fa3b3" text-anchor="end">Subtotal</text>
<text x="1407" y="600.4" font-size="5" fill="#1a1a1a" text-anchor="end" stroke="#1a1a1a" stroke-width="0.18">$4000.00</text>
<text x="1350" y="612.4" font-size="5" fill="#8fa3b3" text-anchor="end">Tax</text>
<text x="1407" y="612.4" font-size="5" fill="#1a1a1a" text-anchor="end" stroke="#1a1a1a" stroke-width="0.18">$520.00</text>
</svg>

<!--MAIN_END-->
</div>

</div>
</body>
</html>
